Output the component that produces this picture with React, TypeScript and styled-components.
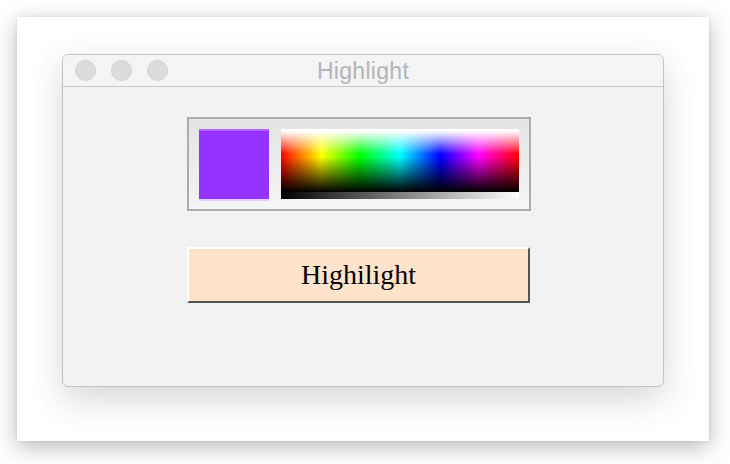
import React from "react";
import styled, { createGlobalStyle } from "styled-components";

const Global = createGlobalStyle`
  html, body { margin: 0; padding: 0; background: #ffffff; }
  body { width: 730px; height: 464px; overflow: hidden; }
`;

const Stage = styled.div`
  width: 730px;
  height: 464px;
  box-sizing: border-box;
  padding: 17px 21px 23px 17px;
  background: #ffffff;
`;

const Sheet = styled.div`
  width: 692px;
  height: 424px;
  box-sizing: border-box;
  background: #ffffff;
  box-shadow: 0 6px 22px rgba(0, 0, 0, 0.28), 0 0 4px rgba(0, 0, 0, 0.08);
  padding: 37px 0 0 45px;
`;

const Window = styled.div`
  width: 602px;
  height: 333px;
  box-sizing: border-box;
  border: 1px solid #c4c4c4;
  border-radius: 6px;
  background: #f2f2f2;
  box-shadow: 0 12px 34px rgba(0, 0, 0, 0.16);
  display: flex;
  flex-direction: column;
  overflow: hidden;
`;

const TitleBar = styled.div`
  height: 32px;
  flex: none;
  box-sizing: border-box;
  border-bottom: 1px solid #c9c9c9;
  background: #f4f4f4;
  display: grid;
  grid-template-columns: 1fr auto 1fr;
  align-items: center;
  padding: 0 12px;
`;

const Lights = styled.div`
  display: flex;
  gap: 15px;
  align-items: center;
`;

const Light = styled.span`
  width: 21px;
  height: 21px;
  border-radius: 50%;
  box-sizing: border-box;
  background: #dcdcdc;
  border: 1px solid #d2d2d2;
`;

const Title = styled.div`
  font-family: "Liberation Sans", Arial, sans-serif;
  font-size: 23px;
  letter-spacing: 0.3px;
  color: #b5b5b5;
  line-height: 1;
  padding-top: 1px;
`;

const Content = styled.div`
  flex: 1;
  display: flex;
  flex-direction: column;
  align-items: flex-start;
  padding: 30px 0 0 124px;
  gap: 36px;
`;

const ChooserBox = styled.div`
  width: 344px;
  height: 94px;
  box-sizing: border-box;
  border: 2px solid #acacac;
  background: linear-gradient(to bottom, #e4e4e4, #f5f5f5);
  display: flex;
  gap: 12px;
  padding: 10px;
`;

const Swatch = styled.div<{ $color: string }>`
  width: 70px;
  height: 72px;
  box-sizing: border-box;
  background: ${(p) => p.$color};
  border-top: 2px solid #b266ff;
  border-bottom: 2px solid #e2ccff;
`;

const Spectrum = styled.div`
  width: 238px;
  height: 70px;
  display: flex;
  flex-direction: column;
`;

const HueField = styled.div`
  flex: 1;
  border-top: 2px solid #ffffff;
  background:
    linear-gradient(to bottom, #ffffff 0%, rgba(255,255,255,0) 38%, rgba(0,0,0,0) 42%, #000000 100%),
    linear-gradient(to right, #ff0000 0%, #ffff00 17%, #00ff00 33%, #00ffff 50%, #0000ff 67%, #ff00ff 83%, #ff0000 100%);
`;

const GrayRamp = styled.div`
  height: 7px;
  background: linear-gradient(to right, #000000, #ffffff);
`;

const ActionButton = styled.button`
  width: 343px;
  height: 56px;
  box-sizing: border-box;
  margin: 0;
  padding: 0;
  background: #ffe4cb;
  border-style: solid;
  border-width: 2px;
  border-color: #ffffff #555555 #555555 #ffffff;
  font-family: "Liberation Serif", "Times New Roman", serif;
  font-size: 28px;
  color: #000000;
  cursor: pointer;
`;

export default function App() {
  return (
    <>
      <Global />
      <Stage>
        <Sheet>
          <Window>
            <TitleBar>
              <Lights>
                <Light />
                <Light />
                <Light />
              </Lights>
              <Title>Highlight</Title>
              <span />
            </TitleBar>
            <Content>
              <ChooserBox>
                <Swatch $color="#9333ff" />
                <Spectrum>
                  <HueField />
                  <GrayRamp />
                </Spectrum>
              </ChooserBox>
              <ActionButton>Highilight</ActionButton>
            </Content>
          </Window>
        </Sheet>
      </Stage>
    </>
  );
}
